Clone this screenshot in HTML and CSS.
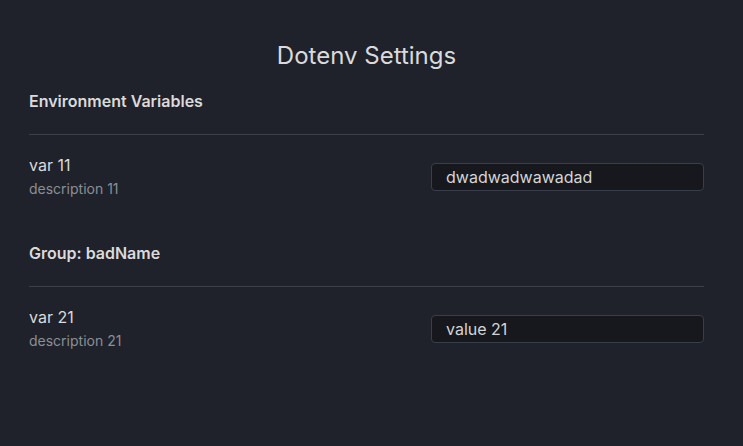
FILE: index.html
```html
<!DOCTYPE html>
<html>
<head>
<meta charset="utf-8">
<link rel="stylesheet" href="styles.css">
</head>
<body>
<div class="page">
  <h1 class="title">Dotenv Settings</h1>
  <div class="heading">Environment Variables</div>
  <div class="setting">
    <div class="info">
      <div class="name">var 11</div>
      <div class="desc">description 11</div>
    </div>
    <input class="field" type="text" value="dwadwadwawadad">
  </div>
  <div class="heading">Group: badName</div>
  <div class="setting">
    <div class="info">
      <div class="name">var 21</div>
      <div class="desc">description 21</div>
    </div>
    <input class="field" type="text" value="value 21">
  </div>
</div>
</body>
</html>
```
FILE: styles.css
```css
html, body {
  margin: 0;
  background: #1f222a;
  height: 100%;
}
body {
  font-family: Inter, "Noto Sans", sans-serif;
  color: #dadadc;
}
.page {
  padding: 41px 39px 0 29px;
}
.title {
  margin: 0;
  font-size: 24px;
  font-weight: 400;
  line-height: 30px;
  text-align: center;
  color: #dadadc;
}
.heading {
  margin-top: 20px;
  font-size: 16px;
  font-weight: 600;
  line-height: 20px;
  padding-bottom: 23px;
  border-bottom: 1px solid #3d4049;
  color: #dadadc;
}
.setting + .heading {
  margin-top: 45px;
}
.setting {
  display: flex;
  align-items: center;
  justify-content: space-between;
  padding-top: 20px;
}
.name {
  font-size: 16px;
  line-height: 20px;
}
.desc {
  margin-top: 5px;
  font-size: 14px;
  line-height: 18px;
  color: #8b8e95;
}
.field {
  box-sizing: border-box;
  width: 273px;
  height: 28px;
  padding: 0 14px;
  background: #16181d;
  border: 1px solid #393e4a;
  border-radius: 4px;
  color: #d4d4d6;
  font-family: Inter, "Noto Sans", sans-serif;
  font-size: 16px;
  outline: none;
}
```
